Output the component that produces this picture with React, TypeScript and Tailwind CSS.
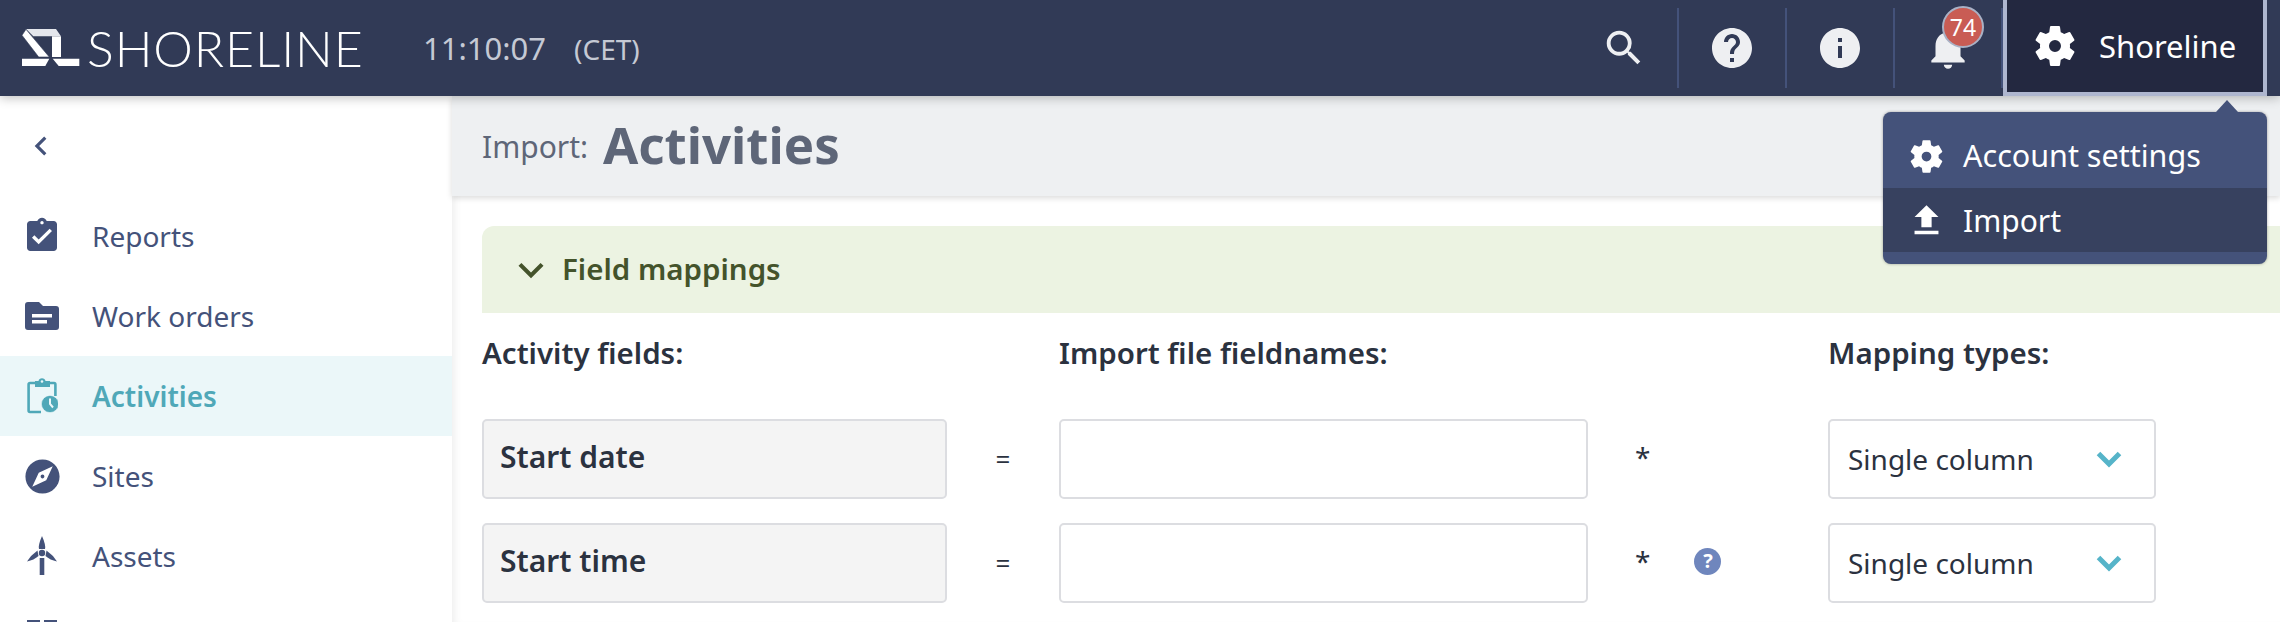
import {
  MdAssignmentTurnedIn,
  MdExplore,
  MdFileUpload,
  MdHelp,
  MdInfo,
  MdKeyboardArrowDown,
  MdKeyboardArrowLeft,
  MdNotifications,
  MdSearch,
} from "react-icons/md";

const LogoMark = () => (
  <svg width="58" height="38" viewBox="0 0 58 38" fill="#fff" className="shrink-0">
    <path d="M4 0 H34 L39 7.3 H11.3 Z" fill="#e4e6ec" />
    <path d="M30 7.3 H39 V28 H30 Z" />
    <path d="M0 6.3 L4 0.3 L27.3 28 H16.7 Z" stroke="#313a56" strokeWidth="0.6" />
    <path d="M0 29.7 H27.3 L23.3 37 H0 Z" />
    <path d="M30.7 29.7 H57.3 V37 H36.7 Z" />
  </svg>
);

const GearIcon = ({ size }: { size: number }) => (
  <svg width={size} height={size} viewBox="0 0 24 24" fill="#fff" fillRule="evenodd" className="shrink-0">
    <path d="M19.43 12.98c.04-.32.07-.64.07-.98s-.03-.66-.07-.98l2.11-1.65c.19-.15.24-.42.12-.64l-2-3.46c-.12-.22-.39-.3-.61-.22l-2.49 1c-.52-.4-1.08-.73-1.69-.98l-.38-2.65C14.46 2.18 14.25 2 14 2h-4c-.25 0-.46.18-.49.42l-.38 2.65c-.61.25-1.17.59-1.69.98l-2.49-1c-.23-.09-.49 0-.61.22l-2 3.46c-.13.22-.07.49.12.64l2.11 1.65c-.04.32-.07.65-.07.98s.03.66.07.98l-2.11 1.65c-.19.15-.24.42-.12.64l2 3.46c.12.22.39.3.61.22l2.49-1c.52.4 1.08.73 1.69.98l.38 2.65c.03.24.24.42.49.42h4c.25 0 .46-.18.49-.42l.38-2.65c.61-.25 1.17-.59 1.69-.98l2.49 1c.23.09.49 0 .61-.22l2-3.46c.12-.22.07-.49-.12-.64l-2.11-1.65zM12 9a3 3 0 1 0 0 6 3 3 0 0 0 0-6z" />
  </svg>
);

const FolderIcon = () => (
  <svg width="34" height="28" viewBox="0 0 34 28" fill="#44527a">
    <path d="M3 0 H14 L18 4 H31 Q34 4 34 7 V25 Q34 28 31 28 H3 Q0 28 0 25 V3 Q0 0 3 0 Z" />
    <rect x="7" y="12" width="20" height="3.5" fill="#fff" />
    <rect x="7" y="18" width="15" height="3.5" fill="#fff" />
  </svg>
);

const ClipboardClockIcon = () => (
  <svg width="32" height="36" viewBox="0 0 32 36" fill="none">
    <path d="M9 5 H4 Q2.6 5 2.6 6.4 V32.5 Q2.6 34 4 34 H15" stroke="#4fa8b8" strokeWidth="2.6" />
    <path d="M24 5 H28 Q29.4 5 29.4 6.4 V18" stroke="#4fa8b8" strokeWidth="2.6" />
    <path d="M9 3 H12.5 A3.6 3.6 0 0 1 19.5 3 H24 V9 H9 Z" fill="#4fa8b8" />
    <circle cx="16" cy="3.5" r="1.3" fill="#eaf6f9" />
    <circle cx="24" cy="26" r="8.6" fill="#4fa8b8" stroke="#eaf6f9" strokeWidth="0.6" />
    <path d="M24 20.5 V26 L27 29.5" stroke="#eaf6f9" strokeWidth="2" />
  </svg>
);

const TurbineIcon = () => (
  <svg width="30" height="40" viewBox="0 0 30 40" fill="#44527a">
    <path d="M15 0 Q19 9 18 13 H12 Q11 9 15 0 Z" />
    <path d="M19.5 14.5 Q26 19 30 25.5 Q23 24 18.5 20 Z" />
    <path d="M10.5 14.5 Q4 19 0 25.5 Q7 24 11.5 20 Z" />
    <circle cx="15" cy="17" r="3.2" />
    <path d="M12.7 22 H17.3 V39 H12.7 Z" />
  </svg>
);

const navItems = [
  { label: "Reports", icon: <MdAssignmentTurnedIn size={40} color="#44527a" /> },
  { label: "Work orders", icon: <FolderIcon /> },
  { label: "Activities", icon: <ClipboardClockIcon />, active: true },
  { label: "Sites", icon: <MdExplore size={41} color="#44527a" /> },
  { label: "Assets", icon: <TurbineIcon /> },
];

const HeaderIcon = ({ children }: { children: React.ReactNode }) => (
  <div className="w-[108px] h-[80px] flex items-center justify-center border-r-2 border-[#44527a]">
    {children}
  </div>
);

const SelectBox = () => (
  <div className="h-[80px] w-[328px] border-2 border-[#dcdde1] rounded-[5px] bg-white flex items-center justify-between pl-[18px] pr-[32px]">
    <span className="text-[28px] text-[#2b323f] whitespace-nowrap">Single column</span>
    <svg width="26" height="17" viewBox="0 0 26 17" fill="none" className="shrink-0">
      <path d="M2.5 2.5 L13 13 L23.5 2.5" stroke="#56b4c9" strokeWidth="5" />
    </svg>
  </div>
);

const MappingRow = ({ label, help }: { label: string; help?: boolean }) => (
  <div className="grid grid-cols-[465px_112px_529px_240px_328px] items-center">
    <div className="h-[80px] border-2 border-[#dcdde1] rounded-[5px] bg-[#f4f4f4] flex items-center pl-[16px] pb-[6px]">
      <span className="text-[30px] font-semibold text-[#2b323f] whitespace-nowrap">{label}</span>
    </div>
    <div className="text-center text-[26px] text-[#2b323f]">=</div>
    <div className="h-[80px] border-2 border-[#dcdde1] rounded-[5px] bg-white" />
    <div className="flex items-center pl-[47px] pb-[4px] gap-[44px] text-[28px] text-[#2b323f]">
      <span>*</span>
      {help && (
        <span className="w-[27px] h-[27px] rounded-full bg-[#6f86bd] text-white text-[20px] font-bold flex items-center justify-center">?</span>
      )}
    </div>
    <SelectBox />
  </div>
);

export default function App() {
  return (
    <div className="relative w-[2280px] h-[622px] overflow-hidden bg-white font-['Noto_Sans',sans-serif]">
      <header className="relative z-20 h-[96px] bg-[#313a56] flex items-center shadow-[0_2px_10px_rgba(0,0,0,0.25)]">
        <div className="flex items-center pl-[22px]">
          <LogoMark />
          <span className="ml-[7px] text-[50px] leading-none font-light tracking-[0.9px] text-white font-['Lato',sans-serif] w-[275px]">SHORELINE</span>
        </div>
        <div className="ml-[61px] text-[31px] text-[#c5c9d4] whitespace-nowrap">
          11:10:07 <span className="ml-[20px] text-[28px]">(CET)</span>
        </div>
        <div className="ml-auto flex items-center h-full">
          <HeaderIcon>
            <MdSearch size={46} color="#eeeff2" />
          </HeaderIcon>
          <HeaderIcon>
            <MdHelp size={48} color="#eeeff2" />
          </HeaderIcon>
          <HeaderIcon>
            <MdInfo size={48} color="#eeeff2" />
          </HeaderIcon>
          <div className="relative w-[108px] h-[80px] flex items-center justify-center border-r-2 border-[#44527a]">
            <MdNotifications size={50} color="#eeeff2" />
            <span className="absolute left-[47px] top-[-2px] w-[42px] h-[42px] rounded-full bg-[#c95c54] border-2 border-[#a9b1c5] text-white text-[23px] flex items-center justify-center">74</span>
          </div>
          <button className="h-full w-[264px] shrink-0 bg-[#232840] border-x-[4px] border-b-[4px] border-[#aeb6cf] flex items-center pl-[24px] gap-[20px] text-white">
            <GearIcon size={48} />
            <span className="text-[31px]">Shoreline</span>
          </button>
          <div className="w-[13px] shrink-0" />
        </div>
      </header>

      <div className="flex h-[526px]">
        <aside className="w-[452px] shrink-0">
          <div className="h-[100px] flex items-center pl-[22px]">
            <MdKeyboardArrowLeft size={38} color="#44527a" />
          </div>
          {navItems.map((item) => (
            <div
              key={item.label}
              className={`h-[80px] flex items-center ${item.active ? "bg-[#ebf7f9] text-[#4fa8b8] font-semibold" : "text-[#44527a]"}`}
            >
              <div className="w-[84px] mr-[8px] flex justify-center">{item.icon}</div>
              <span className="text-[28px]">{item.label}</span>
            </div>
          ))}
          <div className="h-[80px] pl-[27px] pt-[24px] flex gap-[4px] items-start">
            <div className="w-[13px] h-[14px] border-2 border-[#44527a]" />
            <div className="w-[13px] h-[14px] border-2 border-[#44527a]" />
          </div>
        </aside>

        <main className="flex-1 min-w-0 shadow-[inset_8px_0_8px_-6px_rgba(0,0,0,0.08)]">
          <div className="h-[100px] bg-[#eef0f2] flex items-center pl-[30px] shadow-[0_2px_6px_rgba(0,0,0,0.15)]">
            <span className="text-[30px] text-[#5e6678] w-[121px]">Import:</span>
            <span className="text-[51px] font-bold text-[#5e6678] whitespace-nowrap pb-[4px]">Activities</span>
          </div>
          <div className="pl-[30px]">
            <div className="mt-[30px] h-[87px] bg-[#ecf3e2] rounded-tl-[12px] flex items-center pl-[24px] text-[#44532b]">
              <MdKeyboardArrowDown size={50} className="shrink-0" />
              <span className="ml-[6px] text-[29.5px] font-semibold whitespace-nowrap">Field mappings</span>
            </div>
            <div className="grid grid-cols-[465px_112px_529px_240px_328px] h-[80px] items-center text-[29.5px] font-semibold text-[#2b323f] whitespace-nowrap">
              <span>Activity fields:</span>
              <span />
              <span>Import file fieldnames:</span>
              <span />
              <span>Mapping types:</span>
            </div>
            <div className="mt-[26px] flex flex-col gap-[24px]">
              <MappingRow label="Start date" />
              <MappingRow label="Start time" help />
            </div>
          </div>
        </main>
      </div>

      <div className="absolute z-30 left-[1883px] top-[112px] w-[384px] h-[152px] rounded-[8px] bg-[#44527a] shadow-[0_0_3px_rgba(0,0,0,0.35)] text-white">
        <div className="absolute right-[29px] -top-[12px] w-0 h-0 border-x-[11px] border-x-transparent border-b-[12px] border-b-[#44527a]" />
        <div className="h-[76px] flex items-center pl-[24px] pt-[12px] gap-[17px]">
          <GearIcon size={39} />
          <span className="text-[30.5px] whitespace-nowrap">Account settings</span>
        </div>
        <div className="h-[64px] bg-[#37415f] flex items-center pl-[23px] gap-[16px]">
          <MdFileUpload size={41} color="#fff" className="shrink-0" />
          <span className="text-[30px] whitespace-nowrap">Import</span>
        </div>
      </div>
    </div>
  );
}
